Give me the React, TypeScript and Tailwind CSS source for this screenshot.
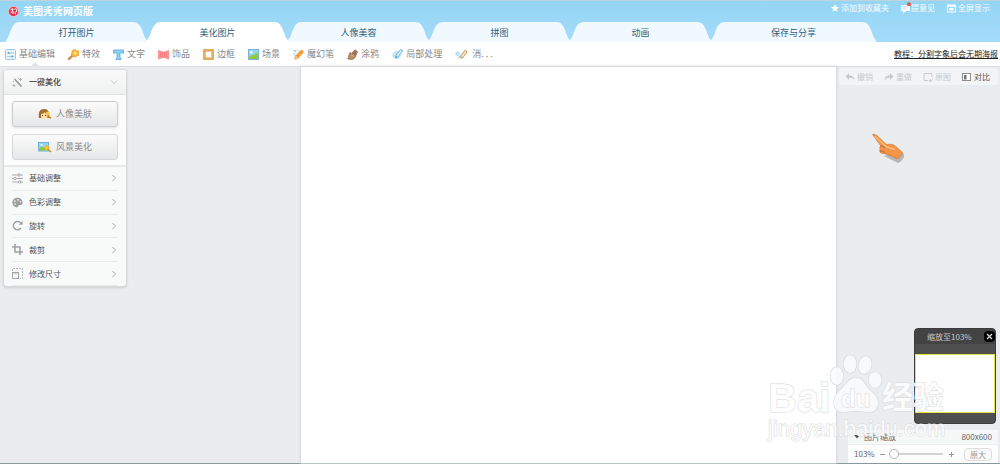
import type { ReactNode } from "react";

const tabs = ["打开图片", "美化图片", "人像美容", "拼图", "动画", "保存与分享"];

const tools: { label: string; icon: ReactNode }[] = [
  {
    label: "基础编辑",
    icon: (
      <>
        <rect x="0.5" y="0.5" width="10" height="10" rx="1" fill="#eaf5fc" stroke="#9cc5e2" />
        <path d="M2 4h7M2 7.5h7" stroke="#8bbada" strokeWidth="0.8" />
        <rect x="3" y="3" width="1.6" height="2" fill="#6fa9d0" />
        <rect x="6.4" y="6.5" width="1.6" height="2" fill="#6fa9d0" />
      </>
    ),
  },
  {
    label: "特效",
    icon: (
      <>
        <path d="M4.5 6.5L1 10" stroke="#c58a4a" strokeWidth="2.4" strokeLinecap="round" />
        <path d="M4 1.5l3-1 1.6 1.2 2 .3-.2 2.2.4 2-2 .8L7 8.2 5 7 3.2 6l.8-2z" fill="#ffbd3f" stroke="#dd9227" strokeWidth="0.7" />
        <circle cx="7" cy="4" r="1.3" fill="#ffe28a" />
      </>
    ),
  },
  {
    label: "文字",
    icon: <path d="M.6 1h9.8v3.2H8.8L8 3.4H7V9l1 .6v.9H3v-.9L4 9V3.4H3l-.8.8H.6z" fill="#8fd3f5" stroke="#4fa9d8" strokeWidth="0.8" />,
  },
  {
    label: "饰品",
    icon: (
      <>
        <path d="M.5 1.5L4.5 3h2l4-1.5v8.5l-4-1.5h-2l-4 1.5z" fill="#ff9b9b" stroke="#f58286" strokeWidth="0.8" />
        <path d="M2.4 3.5v4.6M8.6 3.5v4.6M4.4 3v5.4M6.6 3v5.4" stroke="#f2686d" strokeWidth="0.7" />
      </>
    ),
  },
  {
    label: "边框",
    icon: (
      <>
        <rect x="1" y="1" width="9" height="9" fill="#fff" stroke="#e2a44b" strokeWidth="1.8" />
        <rect x="2.4" y="2.4" width="6.2" height="6.2" fill="none" stroke="#b98a55" strokeWidth="0.5" />
      </>
    ),
  },
  {
    label: "场景",
    icon: (
      <>
        <rect x="0.5" y="0.5" width="10" height="10" fill="#8fd6f8" stroke="#7fb3d3" />
        <path d="M1 8l3-2.5 2 1L8 3.5l2 1.8V10H1z" fill="#8fc93a" />
        <circle cx="3.4" cy="3.2" r="1.2" fill="#fff" />
      </>
    ),
  },
  {
    label: "魔幻笔",
    icon: (
      <>
        <path d="M8.5 3L4.8 7" stroke="#f29a2e" strokeWidth="4" strokeLinecap="round" />
        <path d="M5.6 9L2.6 6 1.6 10.2z" fill="#f7d08a" stroke="#d88a2a" strokeWidth="0.6" />
        <path d="M6.2 4.4l2 2" stroke="#ffd08a" />
        <circle cx="2" cy="2" r="1.3" fill="#9bdcf8" />
        <circle cx="1" cy="5" r="0.9" fill="#9bdcf8" />
        <circle cx="4.6" cy="1.2" r="0.7" fill="#9bdcf8" />
      </>
    ),
  },
  {
    label: "涂鸦",
    icon: (
      <>
        <path d="M5 4l3-3.2 2.6 2L8.6 7z" fill="#a87857" stroke="#7c553b" strokeWidth="0.6" />
        <path d="M3 3.5l5.6 3.2c0 2-2 3.8-4.4 3.9L.6 9.8C2 8.5 1.6 5 3 3.5z" fill="#c08c5e" stroke="#8c6444" strokeWidth="0.7" />
        <path d="M4 5.5l3 1.8" stroke="#e3bd92" strokeWidth="0.8" />
      </>
    ),
  },
  {
    label: "局部处理",
    icon: (
      <>
        <circle cx="4.5" cy="6" r="4.3" fill="#bfe8fb" />
        <path d="M9 2L5 7" stroke="#6faed6" strokeWidth="3.4" strokeLinecap="round" />
        <path d="M8.900 2.200L5.300 6.700" stroke="#eaf5fb" strokeWidth="1.800" strokeLinecap="round" />
        <path d="M4 6.800L2.600 9.200l2.600-1" fill="#5f9ac2" />
      </>
    ),
  },
];

const adjustments: { label: string; icon: ReactNode }[] = [
  {
    label: "基础调整",
    icon: (
      <g fill="#f8faf9" stroke="#a9a9a9">
        <path d="M0 2h11M0 5.5h11M0 9h11" />
        <circle cx="7" cy="2" r="1.2" />
        <circle cx="3" cy="5.5" r="1.2" />
        <circle cx="7.5" cy="9" r="1.2" />
      </g>
    ),
  },
  {
    label: "色彩调整",
    icon: (
      <>
        <path d="M5.5.8C2.5.8.4 2.8.4 5.6s2 4.800 4.600 4.800c1.400 0 .9-1.300 1.700-1.800 1.200-.7 3.900.3 3.900-3C10.600 2.800 8.500.8 5.500.8z" fill="#a0a0a0" />
        <circle cx="3" cy="4" r="0.8" fill="#f8faf9" />
        <circle cx="6" cy="2.9" r="0.8" fill="#f8faf9" />
        <circle cx="8.5" cy="4.8" r="0.8" fill="#f8faf9" />
        <circle cx="3.2" cy="7" r="0.9" fill="#dcdcdc" />
      </>
    ),
  },
  {
    label: "旋转",
    icon: (
      <>
        <path d="M8.8 3A4.2 4.2 0 1 0 9 8" fill="none" stroke="#a2a2a2" strokeWidth="1.4" />
        <path d="M6.6 4.800h4V.9z" fill="#a2a2a2" />
      </>
    ),
  },
  {
    label: "裁剪",
    icon: <path d="M0 3h8v8M3 0v8h8" fill="none" stroke="#a2a2a2" strokeWidth="1.6" />,
  },
  {
    label: "修改尺寸",
    icon: (
      <g fill="none" stroke="#a6a6a6">
        <rect x="0.5" y="4.5" width="6" height="6" />
        <path d="M.5 3V.5h10v10H8" strokeDasharray="2 1" strokeWidth="0.8" />
        <path d="M0 5h7" strokeWidth="1.2" />
      </g>
    ),
  },
];

const historyTools: { label: string; icon: ReactNode; enabled?: boolean }[] = [
  { label: "撤销", icon: <path d="M4 1L.5 4.5 4 8V5.800c3 0 4.500.6 5.500 3C9.500 5 7.500 3.300 4 3.200z" fill="#c8cacd" /> },
  { label: "重做", icon: <path d="M6 1l3.500 3.500L6 8V5.800c-3 0-4.500.6-5.500 3C.5 5 2.500 3.300 6 3.200z" fill="#c8cacd" /> },
  {
    label: "原图",
    icon: (
      <>
        <path d="M5 8.500H1v-7h8V5" fill="none" stroke="#c8cacd" />
        <path d="M9.500 6.500c0 2-1 2.500-2.500 2.500M8 7.500L6 9l2 1" fill="none" stroke="#c8cacd" />
      </>
    ),
  },
  {
    label: "对比",
    enabled: true,
    icon: (
      <>
        <rect x="0.500" y="1.500" width="8" height="7" fill="#fff" stroke="#8c8c8c" />
        <rect x="2" y="3" width="2.500" height="4.500" fill="#777" />
      </>
    ),
  },
];

function ToolIcon({ children }: { children: ReactNode }) {
  return (
    <svg className="size-[11px] shrink-0" viewBox="0 0 11 11" aria-hidden="true">
      {children}
    </svg>
  );
}

function Tab({ label, active, last }: { label: string; active: boolean; last: boolean }) {
  const fill = active ? "fill-white" : "fill-[#f0f9ff]";
  return (
    <button role="tab" aria-selected={active} className={last ? "flex h-5 w-[165px]" : "flex h-5 w-[141px]"}>
      <svg className={`h-5 w-[17px] shrink-0 ${fill}`} viewBox="0 0 17 20" aria-hidden="true">
        <path d="M0 20V18C5 14 4 0 14 0h3v20z" />
      </svg>
      <span
        className={`h-5 flex-1 text-[9px] leading-[21px] text-[#315f7d] ${active ? "bg-white" : "bg-[#f0f9ff]"}`}
      >
        {label}
      </span>
      <svg className={`h-5 w-[17px] shrink-0 ${fill}`} viewBox="0 0 17 20" aria-hidden="true">
        <path d="M17 20V18C12 14 13 0 3 0H0v20z" />
      </svg>
    </button>
  );
}

function SidePanel() {
  return (
    <aside className="w-[124px] overflow-hidden rounded border border-[#d9dadb] bg-[#f8faf9] shadow-sm">
      <h2>
        <button className="flex h-[25px] w-full items-center border-b border-[#dfe0e1] bg-linear-to-b from-[#fafafa] to-[#f0f1f1] px-2 text-[8px] font-medium text-[#444]">
          <svg className="mr-1.5 size-[11px]" viewBox="0 0 11 11" aria-hidden="true">
            <path d="M2.500 2l7 7.500" stroke="#999" strokeWidth="1.800" />
            <path d="M8.500 1v3M7 2.500h3M2 7v3M.5 8.500h3M6 1.500h1M1 4.500h1" stroke="#b5b5b5" />
          </svg>
          一键美化
          <svg className="ml-auto size-2" viewBox="0 0 8 8" fill="none" stroke="#c4c4c4" aria-hidden="true">
            <path d="M1 2.500l3 3 3-3" />
          </svg>
        </button>
      </h2>

      <div className="flex flex-col gap-[7px] border-b-2 border-[#e7e9e9] bg-[#fcfcfc] px-2 pt-1.5 pb-[5px] text-[9px] text-[#8a8a8a]">
        <button className="flex h-[26px] items-center justify-center gap-1 rounded-[3px] border border-[#cdcecf] bg-linear-to-b from-[#fbfbfb] to-[#e6e7e8] shadow-sm">
          <svg className="h-3 w-3.5" viewBox="0 0 14 12" aria-hidden="true">
            <path d="M1 10C0 4 2 1 6 1s6 3 5 9z" fill="#a86a2b" />
            <path d="M3 6c2 0 3-1 3.500-2C7 5.500 8 6 9.500 6v3c0 3-6.500 3-6.500 0z" fill="#ffe0b0" />
            <path d="M4.500 7v1M7.500 7v1" stroke="#6b4421" />
            <path d="M9 7l4 3.500" stroke="#d0862a" strokeWidth="1.500" />
            <circle cx="9.500" cy="5.500" r="2" fill="#ffc440" />
          </svg>
          人像美肤
        </button>
        <button className="flex h-[26px] items-center justify-center gap-1 rounded-[3px] border border-[#d6d7d8] bg-linear-to-b from-[#fbfbfb] to-[#e6e7e8]">
          <svg className="h-3 w-3.5" viewBox="0 0 14 12" aria-hidden="true">
            <rect x="0.500" y="1.500" width="10" height="8.500" fill="#90d7f7" stroke="#6fb1d8" />
            <path d="M1 8l3-3 2 2 2-1 2 1v2.500H1z" fill="#8fca3c" />
            <circle cx="3.500" cy="4" r="1" fill="#fff" />
            <path d="M9 7.500l4 3.500" stroke="#d0862a" strokeWidth="1.500" />
            <circle cx="8.800" cy="6.500" r="2.200" fill="#ffc440" stroke="#e4a02b" strokeWidth="0.500" />
          </svg>
          风景美化
        </button>
      </div>

      <ul className="flex h-[119px] flex-col px-2 text-[8px] text-[#555]">
        {adjustments.map((item) => (
          <li key={item.label} className="flex-1 border-b border-[#e9ebeb]">
            <button className="flex h-full w-full items-center gap-1.5">
              <ToolIcon>{item.icon}</ToolIcon>
              {item.label}
              <svg className="ml-auto size-2" viewBox="0 0 8 8" fill="none" stroke="#a3a3a3" aria-hidden="true">
                <path d="M2.500 1l3 3-3 3" />
              </svg>
            </button>
          </li>
        ))}
      </ul>
    </aside>
  );
}

function Navigator() {
  return (
    <section className="mr-0.5 w-[82px] rounded border border-[#3c3c3c] bg-[#4f4f4f] pb-2.5">
      <div className="flex h-[15px] items-center bg-[#434343] text-[8px] text-[#c8c8c8]">
        <h3 className="flex-1 pl-3">缩放至103%</h3>
        <button aria-label="关闭" className="flex size-[11px] items-center justify-center rounded-sm bg-black">
          <svg className="size-[7px]" viewBox="0 0 7 7" stroke="#ddd" strokeWidth="1.200" aria-hidden="true">
            <path d="M1 1l5 5M6 1L1 6" />
          </svg>
        </button>
      </div>
      <div className="mt-2.5 h-[59px] border border-[#e6e33f] bg-white" />
    </section>
  );
}

function ZoomPanel() {
  return (
    <section className="w-[150px] bg-[#fdfdfd] text-[8px] text-[#666]">
      <div className="flex h-[15px] items-center border-b border-[#eeeeef] bg-[#f6f7f7] px-1.5">
        <svg className="mr-1 size-[6px] fill-[#555]" viewBox="0 0 6 6" aria-hidden="true">
          <path d="M0 1h6L3 4.500z" />
        </svg>
        图片缩放
        <span className="ml-auto">800x600</span>
      </div>
      <div className="flex h-[18px] items-center gap-1 px-1.5">
        <label htmlFor="zoom" className="w-[22px]">
          103%
        </label>
        <button aria-label="缩小" className="h-px w-[5px] bg-[#999]" />
        <input
          id="zoom"
          type="range"
          min="0"
          max="1000"
          defaultValue="0"
          className="h-3 min-w-0 flex-1 appearance-none bg-transparent [&::-webkit-slider-runnable-track]:h-0.5 [&::-webkit-slider-runnable-track]:bg-[#d3d3d3] [&::-webkit-slider-thumb]:-mt-1 [&::-webkit-slider-thumb]:size-2.5 [&::-webkit-slider-thumb]:appearance-none [&::-webkit-slider-thumb]:rounded-full [&::-webkit-slider-thumb]:border [&::-webkit-slider-thumb]:border-[#b5b5b5] [&::-webkit-slider-thumb]:bg-white"
        />
        <button aria-label="放大" className="pr-1.5 pl-0.5">
          <svg className="size-[5px]" viewBox="0 0 5 5" stroke="#999" aria-hidden="true">
            <path d="M0 2.500h5M2.500 0v5" />
          </svg>
        </button>
        <button className="h-[13px] rounded-sm border border-[#dedede] bg-[#fafafa] px-[5px] text-[8px] leading-[11px] text-[#999]">
          原大
        </button>
      </div>
    </section>
  );
}

function Watermark() {
  return (
    <div className="pointer-events-none absolute right-[52px] bottom-5 h-[90px] w-[180px] font-['Liberation_Sans','Noto_Sans_CJK_SC',sans-serif] text-white/80 [paint-order:stroke_fill] [-webkit-text-stroke:1px_#d9dbdc]">
      <span className="absolute top-[29px] left-0 text-[40px] leading-8 font-bold">Bai</span>
      <svg className="absolute top-0 left-[60px] h-[62px] w-14" viewBox="0 0 56 62" fill="#fafbfb" fillOpacity="0.85" stroke="#d5d7d8" strokeWidth="1.2">
        <ellipse cx="9" cy="23" rx="6.5" ry="9" />
        <ellipse cx="22" cy="11" rx="6.500" ry="9" />
        <ellipse cx="37" cy="12" rx="6.500" ry="9" transform="rotate(12 37 12)" />
        <ellipse cx="47" cy="27" rx="6.500" ry="8" />
        <path d="M28 25c-8 0-10 7-15 11S5 47 6 52c1 6 6 8 12 7s14-1 20 0 11-1 12-7-3-11-8-15-6-12-14-12z" />
      </svg>
      <span className="absolute top-[34px] left-[73px] text-2xl leading-6 font-bold">du</span>
      <span className="absolute top-[29px] left-[114px] text-[31px] leading-8 font-bold">经验</span>
      <span className="absolute top-[64px] left-0 text-[22px] leading-6">jingyan.baidu.com</span>
    </div>
  );
}

export default function App() {
  return (
    <div className="flex min-h-screen flex-col border-b border-[#87999a] bg-[#ebecee] font-['Noto_Sans_CJK_SC',sans-serif]">
      {/* HEADER */}
      <header className="border-t border-[#bfd3dc] bg-linear-to-b from-[#94d5f4] to-[#a5dbfa]">
        <div className="flex h-[21px] items-start">
          <h1 className="flex items-center gap-1 pt-0.5 pl-2 text-[10px] leading-4 font-bold text-white">
            <svg className="size-[11px]" viewBox="0 0 11 11" aria-hidden="true">
              <circle cx="5.500" cy="5.500" r="5" fill="#e22c46" stroke="#f7bcc8" />
              <path d="M2.500 4l2-1.500v2L3 7M5 4.500l2-2 1.800 1v2L7 6.500l.5 2M5 5v3" fill="none" stroke="#fff" strokeWidth="1" />
            </svg>
            美图秀秀网页版
          </h1>
          <nav className="ml-auto flex gap-3 pr-2.5 text-[8px] leading-[14px] text-white/90">
            <a href="#favorite" className="flex items-center gap-0.5">
              <svg className="size-2 fill-white" viewBox="0 0 10 10" aria-hidden="true">
                <path d="M5 0l1.500 3.300 3.500.4-2.600 2.400.7 3.600L5 7.900 1.900 9.700l.7-3.600L0 3.700l3.500-.4z" />
              </svg>
              添加到收藏夹
            </a>
            <a href="#feedback" className="flex items-center">
              <svg className="h-3 w-2.5" viewBox="0 0 10 12" aria-hidden="true">
                <path d="M0 3h9v6H5l-3 2.500V9H0z" fill="#fff" />
                <path d="M1.500 5h5M1.500 7h4" stroke="#9ccde8" strokeWidth="0.800" />
                <circle cx="8" cy="2.200" r="2" fill="#df5a40" />
              </svg>
              提意见
            </a>
            <a href="#fullscreen" className="flex items-center gap-0.5">
              <svg className="size-[9px]" viewBox="0 0 9 9" aria-hidden="true">
                <rect x="0.500" y="1" width="8" height="7" fill="none" stroke="#fff" />
                <path d="M1 2h7" stroke="#fff" strokeWidth="1.500" />
                <rect x="2.500" y="4" width="4" height="2.500" fill="#fff" />
              </svg>
              全屏显示
            </a>
          </nav>
        </div>
        <div role="tablist" className="flex pl-[6px]">
          {tabs.map((tab, i) => (
            <Tab key={tab} label={tab} active={i === 1} last={i === tabs.length - 1} />
          ))}
        </div>
      </header>

      {/* TOOLBAR */}
      <div className="relative flex h-[25px] items-center gap-[13px] border-b border-[#dcdddf] bg-white pr-0.5 pl-[5px] text-[9px] text-[#888]">
        {tools.map((tool) => (
          <button key={tool.label} className="flex items-center gap-[3px]">
            <ToolIcon>{tool.icon}</ToolIcon>
            {tool.label}
          </button>
        ))}
        <button className="flex items-center gap-1">
          <svg className="h-[11px] w-[13px]" viewBox="0 0 13 11" aria-hidden="true">
            <circle cx="2.500" cy="4.800" r="2.300" fill="#b5e3f8" />
            <circle cx="4.800" cy="8" r="1.800" fill="#a9dff7" />
            <path d="M10.500 3L7 7.500" stroke="#c79a62" strokeWidth="3.600" strokeLinecap="round" />
            <path d="M10.500 3L7.200 7.200" stroke="#f7ead6" strokeWidth="1.800" strokeLinecap="round" />
          </svg>
          <span>消. . .</span>
        </button>
        <a href="#tutorial" className="ml-auto text-[8px] text-[#222] underline">
          教程：分割字象后会无期海报
        </a>
        <svg className="absolute bottom-[-1px] left-[30px] h-[5px] w-2.5 fill-[#e2e3e5]" viewBox="0 0 10 5" aria-hidden="true">
          <path d="M0 5l5-5 5 5z" />
        </svg>
      </div>

      {/* WORKSPACE */}
      <main className="relative flex flex-1">
        <div className="w-[301px] shrink-0 pt-0.5 pl-[3px]">
          <SidePanel />
        </div>
        <div className="flex-1 bg-white shadow-[0_0_2px_1px_#d3d6d8]" />
        <div className="flex w-[164px] shrink-0 flex-col items-end pt-px pr-0.5">
          <div className="flex h-[17px] items-center gap-[11px] rounded-sm bg-[#f3f4f5] pr-2 pl-1.5 text-[8px]">
            {historyTools.map((tool) => (
              <button
                key={tool.label}
                disabled={!tool.enabled}
                className={`flex items-center gap-0.5 ${tool.enabled ? "text-[#555]" : "text-[#c8cacd]"}`}
              >
                <svg className="size-2.5" viewBox="0 0 10 10" aria-hidden="true">
                  {tool.icon}
                </svg>
                {tool.label}
              </button>
            ))}
          </div>
          <div className="mt-auto flex flex-col items-end gap-1.5">
            <Navigator />
            <ZoomPanel />
          </div>
        </div>

        <Watermark />

        <svg className="pointer-events-none absolute top-[66px] right-[93px] h-8 w-9" viewBox="0 0 36 32" aria-hidden="true">
          <path d="M13 23c5 2 9 5 14 7 3-1 7-5 6-9l-5-3z" fill="#777" opacity="0.450" />
          <path d="M1.500 1.500c2-1 4 .5 6 2.500l8 7.500c4-.5 7-.5 10 2.500l6 5.500c-1 3-3 5-5.500 6.500-5-3-9-4-13-5.500-3 .5-5-1.500-4-4-.5-1.500 0-3 .5-4z" fill="#f2954a" stroke="#c9742f" strokeWidth="0.600" />
          <path d="M9.500 13c2-.5 3 .5 4.500 2M8.800 18c2 0 3 0 5 1.500" fill="none" stroke="#a9602a" strokeWidth="0.900" />
          <path d="M4 3.500l11 10 9 3" fill="none" stroke="#ffb877" strokeWidth="1.600" />
        </svg>
      </main>
    </div>
  );
}
